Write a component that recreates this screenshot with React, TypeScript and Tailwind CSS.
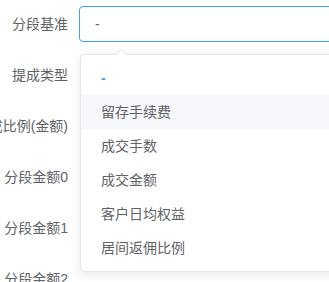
const labels = ['分段基准', '提成类型', '提成比例(金额)', '分段金额0', '分段金额1', '分段金额2'];

const options = ['-', '留存手续费', '成交手数', '成交金额', '客户日均权益', '居间返佣比例'];

export default function App() {
  return (
    <div
      className="relative w-[329px] h-[282px] overflow-hidden bg-white text-[14px] text-[#606266]"
      style={{ fontFamily: '"Liberation Sans", "Noto Sans CJK SC", sans-serif' }}
    >
      <div className="flex flex-col gap-[15px] pt-[6px]">
        {labels.map((label, i) => (
          <div key={label} className="flex h-[36px] items-center">
            <div className="flex w-[79px] shrink-0 justify-end whitespace-nowrap pr-[11px]">{label}</div>
            {i === 0 && (
              <div className="flex h-[36px] w-[300px] shrink-0 items-center rounded-[4px] border border-[#409eff] pl-[15px]">
                -
              </div>
            )}
          </div>
        ))}
      </div>

      {/* select dropdown */}
      <div className="absolute left-[80px] top-[54px] w-[280px] rounded-[4px] border border-[#e4e7ed] bg-white py-[6px] shadow-[0_2px_12px_0_rgba(0,0,0,0.1)]">
        <div className="absolute -top-[6px] left-[34px] h-0 w-0 border-x-[6px] border-b-[6px] border-x-transparent border-b-[#e4e7ed]" />
        <div className="absolute -top-[5px] left-[35px] h-0 w-0 border-x-[5px] border-b-[5px] border-x-transparent border-b-white" />
        {options.map((opt, i) => (
          <div
            key={opt}
            className={
              'flex h-[34px] items-center pl-[20px] ' +
              (i === 0 ? 'font-bold text-[#409eff] ' : '') +
              (i === 1 ? 'bg-[#f5f7fa]' : '')
            }
          >
            {opt}
          </div>
        ))}
      </div>
    </div>
  );
}
